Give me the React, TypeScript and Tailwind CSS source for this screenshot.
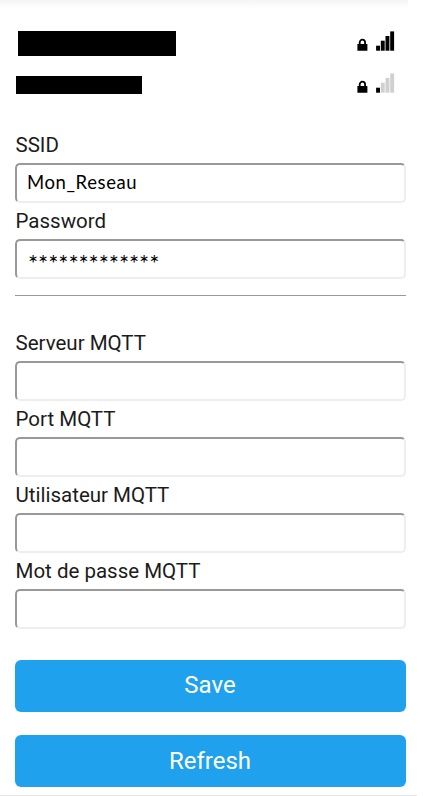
type FieldProps = {
  id: string;
  label: string;
  value?: string;
  valueClass?: string;
};

function Field({ id, label, value = "", valueClass = "" }: FieldProps) {
  return (
    <div className="flex h-[76.2px] flex-col">
      <label htmlFor={id} className="h-[36px] shrink-0 pl-[0.5px] text-[20.5px] leading-[36px]">
        {label}
      </label>
      <input
        id={id}
        type="text"
        defaultValue={value}
        className={`h-[40px] w-full rounded-[5px] border-2 border-t-[#999] border-r-[#eee] border-b-[#eee] border-l-[#999] bg-white px-[10px] font-['Lato',sans-serif] text-black outline-none ${valueClass}`}
      />
    </div>
  );
}

function Lock() {
  return (
    <svg width="11" height="13" viewBox="0 0 11 13" className="shrink-0">
      <path d="M2.7 7V4.6a2.7 2.9 0 0 1 5.4 0V7" fill="none" stroke="#000" strokeWidth="1.8" />
      <rect x="0.4" y="6" width="10" height="6.7" rx="0.5" fill="#000" />
    </svg>
  );
}

function Signal({ strength }: { strength: number }) {
  const bars = [5, 10, 14.7, 19.3];
  return (
    <svg width="19" height="20" viewBox="0 0 19 20" className="shrink-0">
      {bars.map((height, i) => (
        <rect
          key={height}
          x={0.1 + i * 4.7}
          y={19.7 - height}
          width="3.9"
          height={height}
          fill={i < strength ? "#000" : "#d0d0d0"}
        />
      ))}
    </svg>
  );
}

export default function App() {
  return (
    <div className="flex h-[796px] w-[423px] flex-col overflow-hidden bg-white font-['Roboto',sans-serif] text-[#1b1b1b]">
      <div className="h-[8px] w-[408px] shrink-0 bg-linear-to-b from-[#f5f5f5] to-white" />
      <main className="ml-[15px] flex w-[391px] flex-col">
        <div className="mt-[23px] flex h-[25px] items-start pr-[11px] pl-[3px]">
          <div className="h-[25px] w-[158px] bg-black" />
          <div className="ml-auto flex items-end gap-[8px]">
            <Lock />
            <Signal strength={4} />
          </div>
        </div>
        <div className="mt-[16px] flex h-[22px] items-start pr-[11px] pl-px">
          <div className="mt-[4px] h-[18px] w-[126px] bg-black" />
          <div className="mt-[0.5px] ml-auto flex items-end gap-[8px]">
            <Lock />
            <Signal strength={1} />
          </div>
        </div>
        <form className="flex flex-col pt-[33px]" onSubmit={(e) => e.preventDefault()}>
          <Field id="ssid" label="SSID" value="Mon_Reseau" valueClass="pb-[2px] text-[18.5px] tracking-[0.6px]" />
          <Field id="password" label="Password" value="*************" valueClass="pt-[7px] pl-[11px] text-[24px] tracking-[-0.1px]" />
          <hr className="mt-[16px] h-px border-0 bg-[#999]" />
          <div className="pt-[28.5px]">
            <Field id="server" label="Serveur MQTT" />
            <Field id="port" label="Port MQTT" />
            <Field id="user" label="Utilisateur MQTT" />
            <Field id="mqtt-password" label="Mot de passe MQTT" />
          </div>
          <button className="mt-[30px] h-[52px] rounded-[6px] bg-[#20a1ee] pr-px text-[24px] leading-[51px] text-white">
            Save
          </button>
          <button className="mt-[23px] h-[52px] rounded-[6px] bg-[#20a1ee] pr-px text-[24px] leading-[53px] text-white">
            Refresh
          </button>
        </form>
      </main>
      <div className="mt-auto h-px w-[417px] shrink-0 bg-[#e8e8e8]" />
    </div>
  );
}
